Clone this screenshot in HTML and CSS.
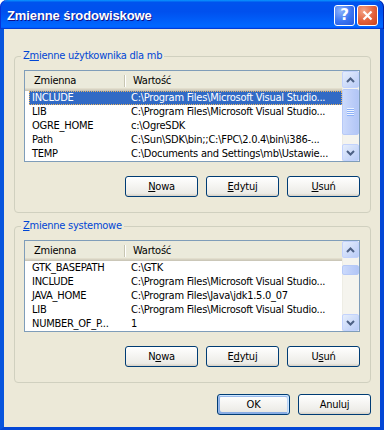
FILE: index.html
```html
<!DOCTYPE html>
<html lang="pl">
<head>
<meta charset="utf-8">
<title>Zmienne środowiskowe</title>
<link rel="stylesheet" href="styles.css">
</head>
<body>
<div class="window">
  <div class="titlebar">
    <span class="title">Zmienne środowiskowe</span>
    <div class="controls">
      <button class="ctl help">?</button>
      <button class="ctl close">
        <svg width="11" height="11" viewBox="0 0 11 11"><path d="M1.5 1.5 L9.5 9.5 M9.5 1.5 L1.5 9.5" stroke="#fff" stroke-width="2.2" fill="none"/></svg>
      </button>
    </div>
  </div>

  <div class="client">
    <fieldset class="group">
      <legend>Z<u>m</u>ienne użytkownika dla mb</legend>
      <div class="listview">
        <div class="lv-main">
          <div class="lv-head"><span class="hcol name">Zmienna</span><span class="hcol">Wartość</span></div>
          <div class="lv-row selected"><span class="cell name">INCLUDE</span><span class="cell val">C:\Program Files\Microsoft Visual Studio...</span></div>
          <div class="lv-row"><span class="cell name">LIB</span><span class="cell val">C:\Program Files\Microsoft Visual Studio...</span></div>
          <div class="lv-row"><span class="cell name">OGRE_HOME</span><span class="cell val">c:\OgreSDK</span></div>
          <div class="lv-row"><span class="cell name">Path</span><span class="cell val">C:\Sun\SDK\bin;;C:\FPC\2.0.4\bin\i386-...</span></div>
          <div class="lv-row"><span class="cell name">TEMP</span><span class="cell val">C:\Documents and Settings\mb\Ustawie...</span></div>
        </div>
        <div class="scrollbar">
          <div class="sb-btn"><svg width="9" height="6" viewBox="0 0 9 6"><path d="M1 5 L4.5 1.5 L8 5" stroke="#4d6185" stroke-width="2" fill="none"/></svg></div>
          <div class="sb-track"><div class="sb-thumb thumb-user"><span class="grip"></span></div></div>
          <div class="sb-btn"><svg width="9" height="6" viewBox="0 0 9 6"><path d="M1 1 L4.5 4.5 L8 1" stroke="#4d6185" stroke-width="2" fill="none"/></svg></div>
        </div>
      </div>
      <div class="buttons">
        <button class="btn"><u>N</u>owa</button>
        <button class="btn"><u>E</u>dytuj</button>
        <button class="btn"><u>U</u>suń</button>
      </div>
    </fieldset>

    <fieldset class="group">
      <legend><u>Z</u>mienne systemowe</legend>
      <div class="listview">
        <div class="lv-main">
          <div class="lv-head"><span class="hcol name">Zmienna</span><span class="hcol">Wartość</span></div>
          <div class="lv-row"><span class="cell name">GTK_BASEPATH</span><span class="cell val">C:\GTK</span></div>
          <div class="lv-row"><span class="cell name">INCLUDE</span><span class="cell val">C:\Program Files\Microsoft Visual Studio...</span></div>
          <div class="lv-row"><span class="cell name">JAVA_HOME</span><span class="cell val">C:\Program Files\Java\jdk1.5.0_07</span></div>
          <div class="lv-row"><span class="cell name">LIB</span><span class="cell val">C:\Program Files\Microsoft Visual Studio...</span></div>
          <div class="lv-row"><span class="cell name">NUMBER_OF_P...</span><span class="cell val">1</span></div>
        </div>
        <div class="scrollbar">
          <div class="sb-btn"><svg width="9" height="6" viewBox="0 0 9 6"><path d="M1 5 L4.5 1.5 L8 5" stroke="#4d6185" stroke-width="2" fill="none"/></svg></div>
          <div class="sb-track"><div class="sb-thumb thumb-system"></div></div>
          <div class="sb-btn"><svg width="9" height="6" viewBox="0 0 9 6"><path d="M1 1 L4.5 4.5 L8 1" stroke="#4d6185" stroke-width="2" fill="none"/></svg></div>
        </div>
      </div>
      <div class="buttons">
        <button class="btn">N<u>o</u>wa</button>
        <button class="btn">E<u>d</u>ytuj</button>
        <button class="btn">U<u>s</u>uń</button>
      </div>
    </fieldset>

    <div class="footer">
      <button class="btn default">OK</button>
      <button class="btn">Anuluj</button>
    </div>
  </div>
</div>
</body>
</html>
```

FILE: styles.css
```css
* {
  box-sizing: border-box;
}

html, body {
  margin: 0;
  background: #fff;
}

body {
  font-family: Tahoma, "DejaVu Sans Condensed", "DejaVu Sans", sans-serif;
  font-size: 11px;
  letter-spacing: -0.25px;
  color: #000;
}

.window {
  width: 384px;
  height: 430px;
  display: flex;
  flex-direction: column;
}

/* title bar */
.titlebar {
  height: 29px;
  flex: none;
  display: flex;
  align-items: center;
  justify-content: space-between;
  padding: 1px 6px 0 7px;
  border-radius: 7px 7px 0 0;
  background: linear-gradient(180deg, #0997ff, #0053ee 8%, #0050ee 40%, #06f 88%, #06f 93%, #005bff 95%, #003dd7 96%, #003dd7);
  box-shadow: inset 1px 0 #0831d9, inset -1px 0 #001ea0;
}

.title {
  color: #fff;
  font-family: "Liberation Sans", "DejaVu Sans", sans-serif;
  font-weight: bold;
  font-size: 13px;
  letter-spacing: -0.1px;
  text-shadow: 1px 1px #0f1089;
}

.controls {
  display: flex;
  gap: 2px;
}

.ctl {
  width: 21px;
  height: 21px;
  padding: 0;
  border: 1px solid #fff;
  border-radius: 3px;
  display: flex;
  align-items: center;
  justify-content: center;
  color: #fff;
  font-family: "DejaVu Sans", sans-serif;
  font-weight: bold;
  font-size: 15px;
}

.help {
  background: radial-gradient(circle at 30% 25%, #8cb2fb, #3a74f2 55%, #2458dc);
}

.close {
  background: radial-gradient(circle at 30% 25%, #f4a486, #e2603a 55%, #c9421a);
}

/* client area */
.client {
  flex: 1;
  background: #ece9d8;
  padding: 20px 9px 0 10px;
  border-style: solid;
  border-width: 0 4px 3px;
  border-color: #0855dd #0347d6 #0347d6 #0855dd;
}

.group {
  margin: 0;
  min-width: 0;
  padding: 7px 10px 15px 9px;
  border: 1px solid #d0d0bf;
  border-radius: 4px;
}

.group + .group {
  margin-top: 6px;
}

.group legend {
  padding: 0 2px;
  margin-left: -3px;
  line-height: 14px;
  color: #0046d5;
}

/* list view */
.listview {
  display: flex;
  width: 100%;
  height: 92px;
  border: 1px solid #7f9db9;
  background: #fff;
}

.lv-main {
  flex: 1;
  min-width: 0;
  overflow: hidden;
}

.lv-head {
  display: flex;
  height: 20px;
  background: #ebeadb;
  box-shadow: inset 0 -1px #cbc7b8, inset 0 -2px #d6d2c2, inset 0 -3px #e2decd;
}

.hcol {
  line-height: 20px;
  padding-left: 7px;
}

.hcol.name {
  width: 101px;
  padding-left: 9px;
  background: linear-gradient(to right, #c7c5b2 0 1px, #fff 1px 2px) no-repeat right 0 top 4px / 2px 12px;
}

.lv-row {
  display: flex;
  height: 14px;
  line-height: 14px;
  margin-left: 4px;
  white-space: nowrap;
}

.cell.name {
  width: 96px;
  flex: none;
  padding-left: 3px;
  overflow: hidden;
}

.cell.val {
  flex: 1;
  padding-left: 6px;
  overflow: hidden;
}

.lv-row.selected {
  background: #316ac5;
  color: #fff;
  outline: 1px dotted #e8b563;
  outline-offset: -1px;
}

/* scrollbar */
.scrollbar {
  width: 17px;
  flex: none;
  display: flex;
  flex-direction: column;
  background: #f5f4ee;
  box-shadow: inset 1px 0 #eeede5;
}

.sb-btn {
  height: 17px;
  flex: none;
  display: flex;
  align-items: center;
  justify-content: center;
  border: 1px solid #c3d3fd;
  border-radius: 2px;
  background: linear-gradient(135deg, #e6eefc, #b9ccf7);
}

.sb-track {
  flex: 1;
  padding-top: 1px;
}

.sb-thumb {
  display: flex;
  align-items: center;
  justify-content: center;
  border: 1px solid #b6c9f7;
  border-radius: 2px;
  background: linear-gradient(to right, #cbdafc, #bccdf8 60%, #b2c6f6);
}

.thumb-user {
  height: 46px;
}

.thumb-system {
  height: 10px;
  margin-top: 6px;
}

.grip {
  width: 7px;
  height: 8px;
  background: repeating-linear-gradient(to bottom, #eef4fe 0 1px, #8cb0f8 1px 2px);
}

/* buttons */
.buttons,
.footer {
  display: grid;
  grid-auto-flow: column;
  grid-auto-columns: 73px;
  justify-content: end;
  column-gap: 8px;
}

.buttons {
  margin-top: 14px;
}

.footer {
  margin-top: 11px;
}

.btn {
  width: 73px;
  height: 21px;
  padding: 0;
  font: inherit;
  letter-spacing: inherit;
  color: #000;
  border: 1px solid #003c74;
  border-radius: 3px;
  background: linear-gradient(180deg, #fff, #ecebe6 86%, #d6d0c5);
}

.btn.default {
  box-shadow: inset -1px 1px #cee7ff, inset 1px 2px #98b8ea, inset -2px 2px #bcd4f6, inset 1px -1px #89ade4, inset 2px -2px #89ade4;
}
```
